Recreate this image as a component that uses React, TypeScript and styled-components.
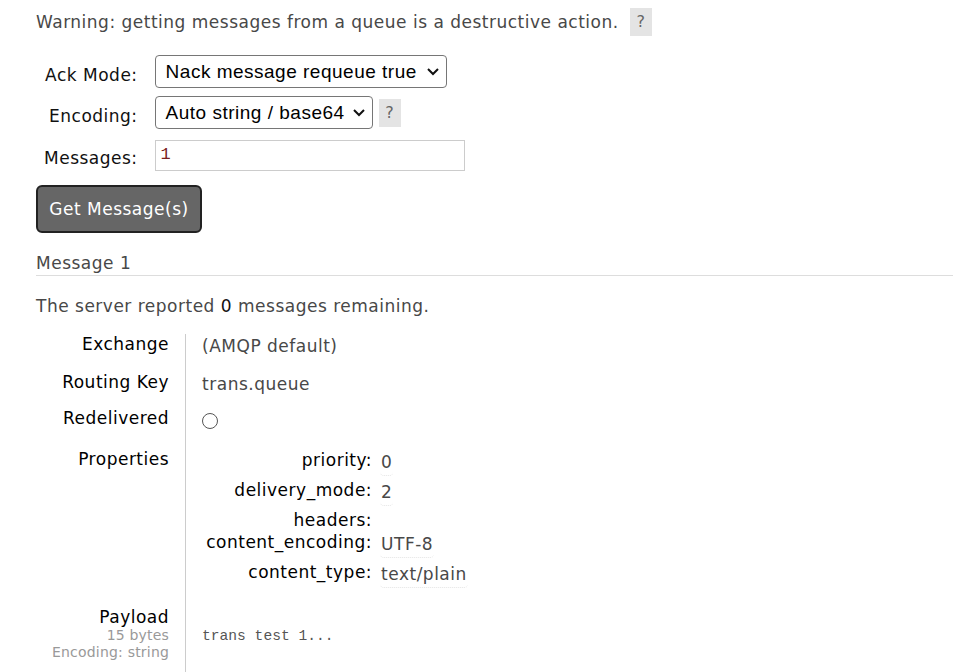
import React from 'react'
import styled, { createGlobalStyle } from 'styled-components'

const GlobalStyle = createGlobalStyle`
  html, body {
    margin: 0;
    padding: 0;
    background: #fff;
  }
  body {
    font-family: 'DejaVu Sans', Verdana, sans-serif;
    font-size: 17px;
    letter-spacing: 0.5px;
    line-height: 20px;
    color: #484848;
  }
`

const Page = styled.div`
  padding: 8px 0 40px 36px;
`

const WarningRow = styled.div`
  display: flex;
  align-items: center;
  gap: 11px;
  height: 28px;
  color: #484848;
`

const HelpTip = styled.span`
  display: inline-block;
  width: 22px;
  height: 28px;
  line-height: 28px;
  text-align: center;
  background: #e4e4e4;
  color: #666;
  font-size: 16px;
  letter-spacing: 0;
`

const Form = styled.div`
  display: grid;
  grid-template-columns: auto auto;
  justify-content: start;
  column-gap: 17px;
  row-gap: 8px;
  margin: 19px 0 0 8px;
  align-items: center;
`

const Label = styled.label<{ $offset?: number }>`
  text-align: right;
  color: #111;
  padding-top: ${({ $offset }) => $offset ?? 0}px;
`

const Field = styled.div`
  display: flex;
  align-items: center;
  gap: 6px;
`

const Select = styled.div<{ $width: number }>`
  box-sizing: border-box;
  width: ${({ $width }) => $width}px;
  height: 33px;
  border: 1px solid #767676;
  border-radius: 4px;
  display: flex;
  align-items: center;
  justify-content: space-between;
  padding: 0 6px 0 10px;
  font-family: 'Liberation Sans', Arial, sans-serif;
  font-size: 19px;
  letter-spacing: 0.5px;
  color: #000;
`

const Chevron = () => (
  <svg width="14" height="9" viewBox="0 0 14 9">
    <path d="M2 2 L7 7 L12 2" fill="none" stroke="#111" strokeWidth="2" />
  </svg>
)

const TextInput = styled.div`
  box-sizing: border-box;
  width: 310px;
  height: 31px;
  margin-top: 3px;
  border: 1px solid #ccc;
  padding: 4px 5px;
  font-family: 'Liberation Mono', 'Courier New', monospace;
  font-size: 17px;
  letter-spacing: 0;
  color: #7a2020;
`

const Button = styled.button`
  margin-top: 14px;
  box-sizing: border-box;
  width: 166px;
  height: 48px;
  background: #666;
  color: #fff;
  border: 2px solid #222;
  border-radius: 6px;
  font-family: 'DejaVu Sans', Verdana, sans-serif;
  font-size: 17px;
  letter-spacing: 0.5px;
  cursor: pointer;
`

const SectionTitle = styled.h3`
  margin: 20px 0 0 0;
  padding-bottom: 2px;
  font-weight: normal;
  font-size: 17px;
  color: #484848;
  border-bottom: 1px solid #ddd;
`

const Summary = styled.p`
  margin: 20px 0 0 0;
  color: #484848;
  b {
    color: #111;
    font-weight: normal;
  }
`

const Details = styled.div`
  display: grid;
  grid-template-columns: auto 1fr;
  margin-top: 18px;
`

const Key = styled.div<{ $h: number }>`
  text-align: right;
  color: #000;
  padding: 0 16px 0 16px;
  height: ${({ $h }) => $h}px;
`

const Value = styled.div<{ $h: number; $top?: number }>`
  border-left: 1px solid #ccc;
  padding: ${({ $top }) => $top ?? 2}px 0 0 16px;
  color: #484848;
  height: ${({ $h }) => $h}px;
  box-sizing: border-box;
`

const Sub = styled.div`
  font-size: 14px;
  letter-spacing: 0.2px;
  color: #999;
  line-height: 17px;
`

const Radio = styled.span`
  display: inline-block;
  box-sizing: border-box;
  width: 16px;
  height: 16px;
  margin-top: 3px;
  border: 1px solid #555;
  border-radius: 50%;
`

const Props = styled.div`
  display: grid;
  grid-template-columns: 170px auto;
  justify-content: start;
  column-gap: 8px;
`

const PropKey = styled.div`
  text-align: right;
  color: #000;
  line-height: 22px;
`

const PropValue = styled.div<{ $empty?: boolean }>`
  height: ${({ $empty }) => ($empty ? 22 : 30)}px;
  span {
    display: inline-block;
    line-height: 22px;
    padding: 2px 1px 2px 1px;
    border-bottom: 1px dotted #e4e4e4;
    border-radius: 4px;
    color: #484848;
  }
`

const Payload = styled.pre`
  margin: 17px 0 0 0;
  font-family: 'Liberation Mono', 'Courier New', monospace;
  font-size: 14.6px;
  letter-spacing: 0;
  color: #555;
`

const properties: [string, string][] = [
  ['priority', '0'],
  ['delivery_mode', '2'],
  ['headers', ''],
  ['content_encoding', 'UTF-8'],
  ['content_type', 'text/plain'],
]

export default function App() {
  return (
    <Page>
      <GlobalStyle />
      <WarningRow>
        <span>Warning: getting messages from a queue is a destructive action.</span>
        <HelpTip>?</HelpTip>
      </WarningRow>

      <Form>
        <Label $offset={6}>Ack Mode:</Label>
        <Field>
          <Select $width={292}>
            <span>Nack message requeue true</span>
            <Chevron />
          </Select>
        </Field>
        <Label $offset={6}>Encoding:</Label>
        <Field>
          <Select $width={218}>
            <span>Auto string / base64</span>
            <Chevron />
          </Select>
          <HelpTip>?</HelpTip>
        </Field>
        <Label $offset={8}>Messages:</Label>
        <Field>
          <TextInput>1</TextInput>
        </Field>
      </Form>

      <Button>Get Message(s)</Button>

      <SectionTitle>Message 1</SectionTitle>
      <Summary>
        The server reported <b>0</b> messages remaining.
      </Summary>

      <Details>
        <Key $h={38}>Exchange</Key>
        <Value $h={38}>(AMQP default)</Value>
        <Key $h={36}>Routing Key</Key>
        <Value $h={36}>trans.queue</Value>
        <Key $h={41}>Redelivered</Key>
        <Value $h={41}>
          <Radio />
        </Value>
        <Key $h={158}>Properties</Key>
        <Value $h={158} $top={0}>
          <Props>
            {properties.map(([k, v]) => (
              <React.Fragment key={k}>
                <PropKey>{k}:</PropKey>
                <PropValue $empty={!v}>{v && <span>{v}</span>}</PropValue>
              </React.Fragment>
            ))}
          </Props>
        </Value>
        <Key $h={80}>
          <div>Payload</div>
          <Sub>15 bytes</Sub>
          <Sub>Encoding: string</Sub>
        </Key>
        <Value $h={80}>
          <Payload>trans test 1...</Payload>
        </Value>
      </Details>
    </Page>
  )
}
